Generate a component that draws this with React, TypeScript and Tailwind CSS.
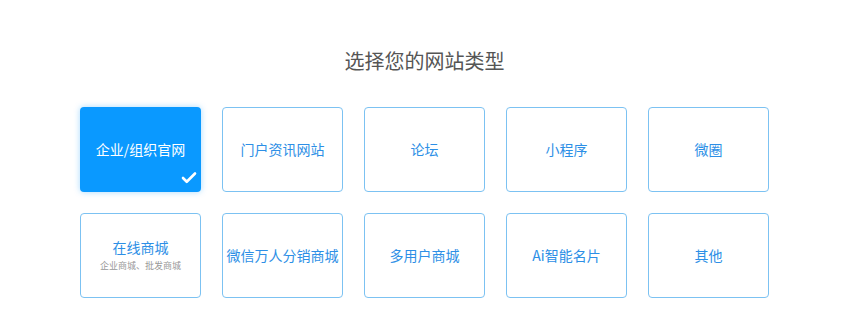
import { Check } from 'lucide-react';

interface SiteType {
  label: string;
  sub?: string;
}

const types: SiteType[] = [
  { label: '企业/组织官网' },
  { label: '门户资讯网站' },
  { label: '论坛' },
  { label: '小程序' },
  { label: '微圈' },
  { label: '在线商城', sub: '企业商城、批发商城' },
  { label: '微信万人分销商城' },
  { label: '多用户商城' },
  { label: 'Ai智能名片' },
  { label: '其他' },
];

export default function App() {
  const selected = 0;

  return (
    <div
      className="w-[860px] h-[331px] bg-white"
      style={{ fontFamily: '"Noto Sans CJK SC", "Noto Sans", sans-serif' }}
    >
      <div className="w-[689px] ml-[80px] pt-[47px]">
        <h2 className="text-center text-[20px] leading-[28px] text-[#555555] font-normal">
          选择您的网站类型
        </h2>

        <div className="mt-[32px] grid grid-cols-5 gap-x-[21px] gap-y-[21px]">
          {types.map((t, i) => {
            const active = i === selected;
            return (
              <div
                key={t.label}
                className={
                  active
                    ? 'relative h-[85px] rounded-[4px] bg-[#0a99ff] flex flex-col items-center justify-center text-white shadow-[0_0_6px_rgba(10,153,255,0.35)]'
                    : 'relative h-[85px] rounded-[4px] border border-[#7cc2f2] bg-white flex flex-col items-center justify-center text-[#2d8fe6]'
                }
              >
                <span className="text-[14px] leading-[20px] whitespace-nowrap -mt-[2px]">{t.label}</span>
                {t.sub && (
                  <span className="text-[9px] leading-[12px] mt-[3px] text-[#999999] whitespace-nowrap">
                    {t.sub}
                  </span>
                )}
                {active && (
                  <Check
                    className="absolute right-[3px] bottom-[5px] w-[18px] h-[18px] text-white"
                    strokeWidth={3.5}
                  />
                )}
              </div>
            );
          })}
        </div>
      </div>
    </div>
  );
}
